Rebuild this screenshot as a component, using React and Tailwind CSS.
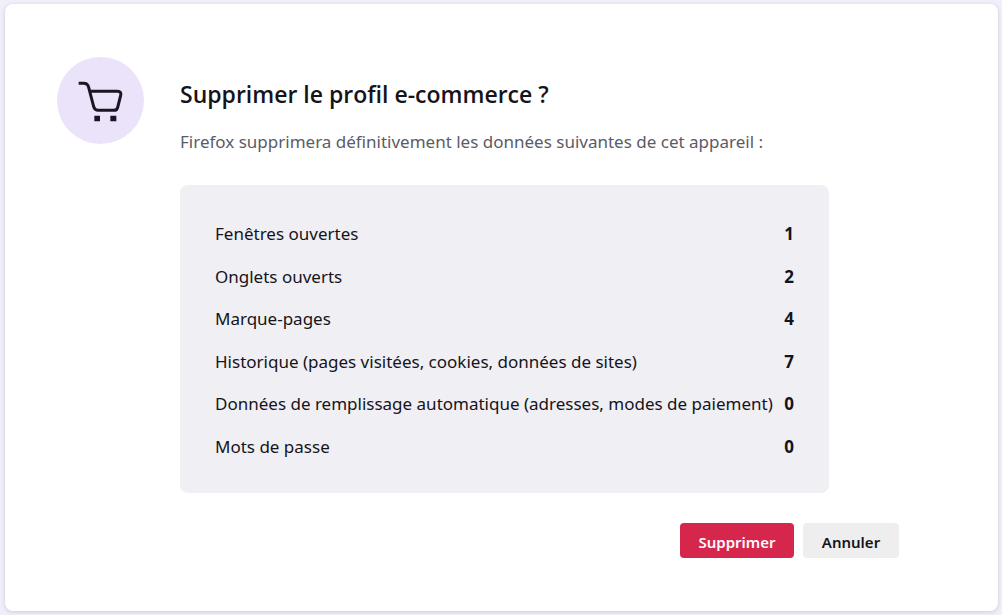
const donnees = [
  { id: "fenetres", label: "Fenêtres ouvertes", total: 1 },
  { id: "onglets", label: "Onglets ouverts", total: 2 },
  { id: "marque-pages", label: "Marque-pages", total: 4 },
  {
    id: "historique",
    label: "Historique (pages visitées, cookies, données de sites)",
    total: 7,
  },
  {
    id: "remplissage",
    label: "Données de remplissage automatique (adresses, modes de paiement)",
    total: 0,
  },
  { id: "mots-de-passe", label: "Mots de passe", total: 0 },
];

function AvatarPanier() {
  return (
    <div className="flex size-[87px] shrink-0 rounded-full bg-[#ebe3f9] text-[#1b1524]">
      <svg viewBox="0 0 261 261" className="size-full" fill="none" aria-hidden="true">
        <path
          d="M65 79h15q12 0 15 12l15 58q3 11 14 11h47q9 0 11-9l9-36q3-12-9-12H99"
          stroke="currentColor"
          strokeWidth="9"
        />
        <path d="M112 176h17v17h-17zM160 176h18v17h-18z" fill="currentColor" />
      </svg>
    </div>
  );
}

export default function App() {
  return (
    <div className="flex min-h-screen flex-col bg-[#f2effb] p-1 pl-[5px] font-['Noto_Sans','Open_Sans',sans-serif] text-[#15141a]">
      <main className="flex grow items-start gap-9 rounded-lg bg-white px-[52px] pt-[53px] pb-[53px] shadow-[0_1px_4px_rgba(58,57,68,0.2)]">
        <AvatarPanier />

        <div className="max-w-[719px] grow pt-[21px]">
          <h1 className="font-['Open_Sans',sans-serif] text-[23px] leading-8 font-semibold">
            Supprimer le profil e-commerce ?
          </h1>
          <p className="mt-[18px] text-[17px] leading-7 text-[#5b5b66]">
            Firefox supprimera définitivement les données suivantes de cet appareil :
          </p>

          <div className="mt-[29px] mr-[70px] rounded-lg bg-[#f0eff4] px-[35px] pt-[35px] pb-8">
            <dl className="flex min-h-[241px] flex-col justify-between text-[17px] leading-7">
              {donnees.map((d) => (
                <div key={d.id} className="flex justify-between">
                  <dt>{d.label}</dt>
                  <dd className="font-bold">{d.total}</dd>
                </div>
              ))}
            </dl>
          </div>

          <div className="mt-[30px] flex justify-end gap-[9px] text-[15px] font-semibold">
            <button
              type="button"
              className="h-[35px] w-[114px] rounded bg-[#d7264c] pt-1 text-[#fbfbfe]"
            >
              Supprimer
            </button>
            <button type="button" className="h-[35px] w-24 rounded bg-[#eeeeee] pt-1">
              Annuler
            </button>
          </div>
        </div>
      </main>
    </div>
  );
}
